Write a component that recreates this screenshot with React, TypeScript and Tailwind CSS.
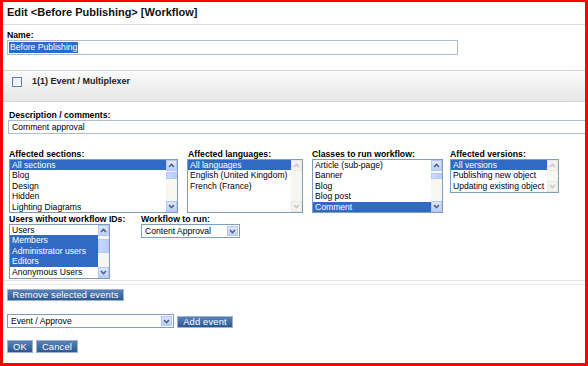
import React from "react";

type Item = { label: string; selected?: boolean };

const Chevron = ({ up, disabled }: { up?: boolean; disabled?: boolean }) => (
  <svg width="7" height="5" viewBox="0 0 7 5">
    <polyline
      points={up ? "1,4 3.5,1.5 6,4" : "1,1 3.5,3.5 6,1"}
      fill="none"
      stroke={disabled ? "#c9c9c4" : "#4d6185"}
      strokeWidth="1.6"
    />
  </svg>
);

const ArrowBtn = ({ up, disabled }: { up?: boolean; disabled?: boolean }) => (
  <div
    className={`h-[11px] w-full flex items-center justify-center border ${
      disabled
        ? "bg-[#f4f3ee] border-[#e8e7e1]"
        : "bg-gradient-to-b from-[#dde7fc] to-[#bccffa] border-[#b5c8f3]"
    }`}
  >
    <Chevron up={up} disabled={disabled} />
  </div>
);

const ListBox = ({
  items,
  className,
  disabled,
  thumb,
}: {
  items: Item[];
  className: string;
  disabled?: boolean;
  thumb?: string;
}) => (
  <div className={`flex border border-[#7f9db9] bg-white overflow-hidden ${className}`}>
    <div className="flex-1 flex flex-col overflow-hidden">
      {items.map((it, i) => (
        <div
          key={i}
          className={`h-[10.4px] shrink-0 leading-[10.4px] text-[8.6px] pl-[2px] whitespace-nowrap ${
            it.selected ? "bg-[#316ac5] text-white" : "text-black"
          }`}
        >
          {it.label}
        </div>
      ))}
    </div>
    <div className="w-[11px] flex flex-col bg-[#f7f7f2]">
      <ArrowBtn up disabled={disabled} />
      <div className="flex-1 flex flex-col">
        {thumb && (
          <div
            className={`w-full border border-[#b5c8f3] bg-gradient-to-r from-[#c9d8fc] to-[#bbcdf7] ${thumb}`}
          />
        )}
      </div>
      <ArrowBtn disabled={disabled} />
    </div>
  </div>
);

const Select = ({ value, className }: { value: string; className: string }) => (
  <div className={`flex items-center border border-[#7f9db9] bg-white ${className}`}>
    <div className="flex-1 pl-[3px] text-[8.6px] leading-[12px] whitespace-nowrap">{value}</div>
    <div className="w-[12px] h-full py-[1px] pr-[1px]">
      <div className="h-full flex items-center justify-center bg-gradient-to-b from-[#dde7fc] to-[#bccffa] border border-[#b5c8f3]">
        <Chevron />
      </div>
    </div>
  </div>
);

const Button = ({ children, className }: { children: React.ReactNode; className: string }) => (
  <div
    className={`h-[12px] flex items-center justify-center border border-[#9fb2cc] bg-gradient-to-b from-[#5a82ba] to-[#2c5891] text-white text-[9.4px] leading-[10px] tracking-[0.15px] whitespace-nowrap ${className}`}
  >
    {children}
  </div>
);

const Label = ({ children, className = "" }: { children: React.ReactNode; className?: string }) => (
  <div className={`text-[8.7px] font-bold leading-[10px] text-black whitespace-nowrap ${className}`}>
    {children}
  </div>
);

export default function App() {
  return (
    <div className="w-[588px] h-[366px] overflow-hidden bg-white border-solid border-[#ff0000] border-t-2 border-l-[3px] border-r-[3px] border-b-[3px] font-['Liberation_Sans',Arial,sans-serif] text-black">
      {/* title */}
      <div className="h-[22px] pl-[4px] pt-[4px] text-[11px] leading-[13px] font-bold text-[#111]">
        Edit &lt;Before Publishing&gt; [Workflow]
      </div>
      <div className="h-px bg-[#dcdcdc]" />

      {/* name */}
      <div className="pl-[4px] pt-[5px]">
        <Label>Name:</Label>
        <div className="w-[451px] h-[15px] border border-[#a9bcd4] flex items-center pl-[1px]">
          <span className="bg-[#316ac5] text-white text-[8.6px] leading-[11px] px-[1px]">
            Before Publishing
          </span>
        </div>
      </div>

      <div className="mt-[15px] h-px bg-[#d4d4d4]" />

      {/* event band */}
      <div className="h-[31px] bg-gradient-to-b from-[#fbfbfb] to-[#e6e6e6] border-b border-[#d8d8d8] pt-[5px] pl-[9px]">
        <div className="h-[11px] flex items-center gap-[10px]">
          <div className="w-[10px] h-[10px] border border-[#5a7ea6] bg-gradient-to-br from-[#e4e8ef] to-[#ffffff]" />
          <div className="text-[9px] font-bold leading-[11px] text-[#222]">1(1) Event / Multiplexer</div>
        </div>
      </div>

      {/* description */}
      <div className="pl-[5px] pt-[8px]">
        <Label className="pl-[1px]">Description / comments:</Label>
        <div className="w-[620px] h-[14px] border border-[#a9bcd4] flex items-center pl-[3px] text-[8.6px] leading-[11px]">
          Comment approval
        </div>
      </div>

      {/* first row of lists */}
      <div className="flex items-start pl-[6px] pt-[15px]">
        <div className="w-[169px]">
          <Label>Affected sections:</Label>
          <ListBox
            className="h-[54px]"
            thumb="mt-[1px] h-[7px]"
            items={[
              { label: "All sections", selected: true },
              { label: "Blog" },
              { label: "Design" },
              { label: "Hidden" },
              { label: "Lighting Diagrams" },
            ]}
          />
        </div>
        <div className="w-[116px] ml-[9px]">
          <Label className="pl-[1px]">Affected languages:</Label>
          <ListBox
            className="h-[54px]"
            disabled
            items={[
              { label: "All languages", selected: true },
              { label: "English (United Kingdom)" },
              { label: "French (France)" },
            ]}
          />
        </div>
        <div className="w-[131px] ml-[9px]">
          <Label>Classes to run workflow:</Label>
          <ListBox
            className="h-[54px]"
            thumb="mt-[2px] h-[6px]"
            items={[
              { label: "Article (sub-page)" },
              { label: "Banner" },
              { label: "Blog" },
              { label: "Blog post" },
              { label: "Comment", selected: true },
            ]}
          />
        </div>
        <div className="w-[109px] ml-[7px]">
          <Label>Affected versions:</Label>
          <ListBox
            className="h-[34px]"
            disabled
            items={[
              { label: "All versions", selected: true },
              { label: "Publishing new object" },
              { label: "Updating existing object" },
            ]}
          />
        </div>
      </div>

      {/* second row */}
      <div className="flex items-start pl-[6px] pt-[1px]">
        <div className="w-[101px]">
          <Label>Users without workflow IDs:</Label>
          <ListBox
            className="h-[55px]"
            thumb="mt-[3px] h-[14px]"
            items={[
              { label: "Users" },
              { label: "Members", selected: true },
              { label: "Administrator users", selected: true },
              { label: "Editors", selected: true },
              { label: "Anonymous Users" },
            ]}
          />
        </div>
        <div className="ml-[31px]">
          <Label>Workflow to run:</Label>
          <Select className="w-[99px] h-[14px]" value="Content Approval" />
        </div>
      </div>

      <div className="mt-[1px] h-px bg-[#e2e2e2]" />
      <div className="mt-[3px] h-px bg-[#efefef]" />

      {/* actions */}
      <div className="pl-[4px] pt-[4px]">
        <Button className="w-[117px]">Remove selected events</Button>
      </div>

      <div className="pl-[4px] pt-[13px] flex items-center gap-[3px]">
        <Select className="w-[167px] h-[14px]" value="Event / Approve" />
        <Button className="w-[56px] mt-[1px]">Add event</Button>
      </div>

      <div className="pl-[4px] pt-[12px] flex gap-[3px]">
        <Button className="w-[26px] h-[13px]">OK</Button>
        <Button className="w-[42px] h-[13px]">Cancel</Button>
      </div>
    </div>
  );
}
